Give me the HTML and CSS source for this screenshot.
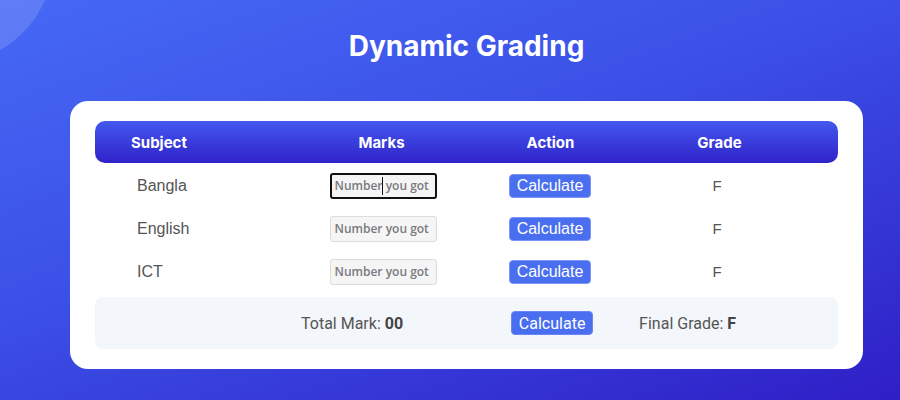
FILE: index.html
```html
<!DOCTYPE html>
<html>
<head>
<meta charset="utf-8">
<link rel="stylesheet" href="styles.css">
</head>
<body>
<div class="blob"></div>
<main class="wrap">
  <h1 class="title">Dynamic Grading</h1>
  <section class="card">
    <div class="grid head">
      <div class="c1">Subject</div>
      <div class="cc">Marks</div>
      <div class="cc">Action</div>
      <div class="cc">Grade</div>
    </div>
    <div class="grid row">
      <div class="c1">Bangla</div>
      <div class="cc"><span class="field"><input class="mark focused" placeholder="Number you got"><span class="ibeam"></span></span></div>
      <div class="cc"><button class="btn">Calculate</button></div>
      <div class="cc grade">F</div>
    </div>
    <div class="grid row">
      <div class="c1">English</div>
      <div class="cc"><span class="field"><input class="mark" placeholder="Number you got"></span></div>
      <div class="cc"><button class="btn">Calculate</button></div>
      <div class="cc grade">F</div>
    </div>
    <div class="grid row">
      <div class="c1">ICT</div>
      <div class="cc"><span class="field"><input class="mark" placeholder="Number you got"></span></div>
      <div class="cc"><button class="btn">Calculate</button></div>
      <div class="cc grade">F</div>
    </div>
    <div class="foot">
      <div class="total">Total Mark: <b>00</b></div>
      <button class="btn btn-foot">Calculate</button>
      <div class="final">Final Grade: <b>F</b></div>
    </div>
  </section>
</main>
</body>
</html>
```
FILE: styles.css
```css
html, body {
  margin: 0;
  height: 100%;
}
body {
  background: linear-gradient(160deg, #4669f6 0%, #3b4fe6 45%, #2f1fc6 100%);
  font-family: "Liberation Sans", Arial, sans-serif;
  overflow: hidden;
  position: relative;
}
.blob {
  position: absolute;
  left: -153px;
  top: -143px;
  width: 206px;
  height: 206px;
  border-radius: 50%;
  background: rgba(255, 255, 255, 0.14);
}
.wrap {
  width: 793px;
  margin-left: 70px;
  padding-top: 30px;
  position: relative;
}
.title {
  margin: 0;
  text-align: center;
  color: #fff;
  font-family: Inter, sans-serif;
  font-weight: 700;
  font-size: 28px;
  line-height: 32px;
}
.card {
  margin-top: 39px;
  background: #fff;
  border-radius: 18px;
  padding: 20px 25px 20px;
}
.grid {
  display: grid;
  grid-template-columns: 1fr 169px 169px 169px;
  padding-right: 34px;
  align-items: center;
}
.cc {
  text-align: center;
  display: flex;
  justify-content: center;
  align-items: center;
}
.head {
  height: 42px;
  border-radius: 10px;
  background: linear-gradient(180deg, #4358ee 0%, #3022c9 100%);
  color: #fff;
  font-family: Inter, sans-serif;
  font-weight: 700;
  font-size: 15px;
}
.head .c1 {
  padding-left: 36px;
}
.row {
  height: 43px;
  color: #555;
  font-size: 16px;
}
.row:nth-of-type(2) {
  margin-top: 1px;
}
.row .c1 {
  padding-left: 42px;
}
.grade {
  font-size: 15px;
  padding-right: 5px;
}
.field {
  position: relative;
  display: inline-flex;
  margin-left: 3px;
}
.mark {
  box-sizing: border-box;
  width: 107px;
  height: 26px;
  border: 1px solid #dcdcdc;
  border-radius: 3px;
  background: #f5f5f5;
  padding: 0 4px;
  font-family: "Open Sans", sans-serif;
  font-weight: 600;
  font-size: 12px;
  outline: none;
}
.mark::placeholder {
  color: #7a7a80;
}
.mark.focused {
  border: 2px solid #111;
  padding: 0 3px;
}
.ibeam {
  position: absolute;
  left: 52px;
  top: 4px;
  width: 1px;
  height: 18px;
  background: #111;
}
.btn {
  width: 82px;
  height: 24px;
  border: 1px solid #7d95f7;
  border-radius: 4px;
  background: #4a6ef0;
  color: #fff;
  font-family: "Liberation Sans", Arial, sans-serif;
  font-size: 16px;
  padding: 0;
  margin-left: -1px;
}
.foot {
  margin-top: 4px;
  height: 52px;
  border-radius: 8px;
  background: #f3f6fb;
  color: #555;
  font-family: Roboto, sans-serif;
  font-size: 16px;
  display: flex;
  align-items: center;
  padding-left: 206px;
}
.foot b {
  font-weight: 700;
  color: #444;
}
.btn-foot {
  font-family: Roboto, sans-serif;
  margin-left: 108px;
  border-color: #6b86f5;
}
.final {
  margin-left: 46px;
}
```
